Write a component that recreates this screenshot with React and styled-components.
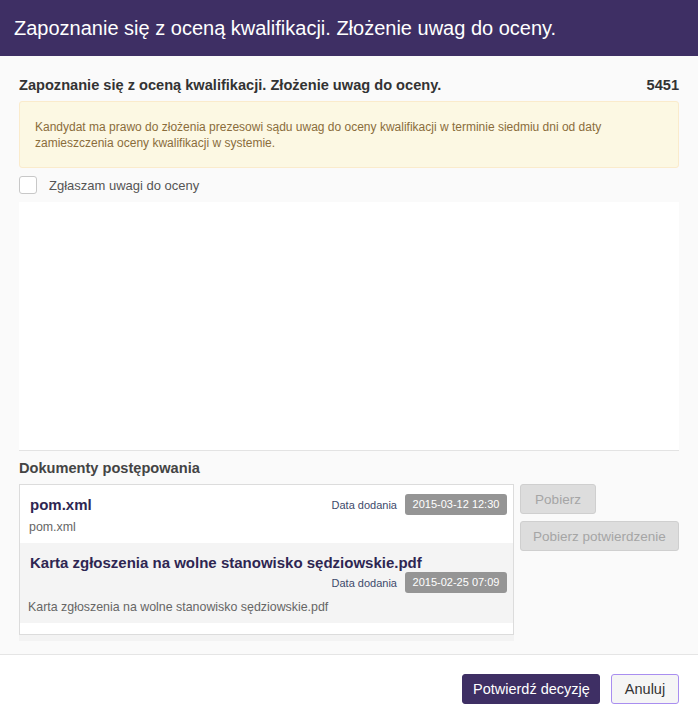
import React from "react";
import styled, { createGlobalStyle } from "styled-components";

const GlobalStyle = createGlobalStyle`
  html, body {
    margin: 0;
    padding: 0;
    background: #fff;
    font-family: "Liberation Sans", Arial, sans-serif;
  }
  * { box-sizing: border-box; }
`;

const Modal = styled.div`
  width: 698px;
  height: 724px;
  display: flex;
  flex-direction: column;
  background: #fff;
`;

const Header = styled.div`
  height: 56px;
  background: #3e2f64;
  color: #fff;
  display: flex;
  align-items: center;
  padding: 0 14px;
  font-size: 20px;
  flex-shrink: 0;
`;

const Body = styled.div`
  flex: 1;
  background: #fafafa;
  padding: 19px 19px 0;
  display: flex;
  flex-direction: column;
`;

const TitleRow = styled.div`
  height: 20px;
  display: flex;
  justify-content: space-between;
  align-items: center;
  font-size: 14.6px;
  font-weight: bold;
  color: #333;
`;

const Alert = styled.div`
  margin-top: 6px;
  background: #fcf8e3;
  border: 1px solid #faebcc;
  border-radius: 3px;
  color: #8a6d3b;
  font-size: 12px;
  line-height: 16px;
  padding: 17px 15px 16px;
`;

const CheckRow = styled.label`
  margin-top: 8px;
  display: flex;
  align-items: center;
  gap: 12px;
  font-size: 13px;
  color: #555;
`;

const Box = styled.span`
  width: 18px;
  height: 18px;
  border: 1px solid #c8c8c8;
  border-radius: 3px;
  background: #fff;
`;

const Blank = styled.div`
  margin-top: 8px;
  height: 249px;
  background: #fff;
  border-bottom: 1px solid #e3e3e3;
`;

const SectionTitle = styled.div`
  margin-top: 8px;
  font-size: 14.6px;
  font-weight: bold;
  color: #444;
  height: 18px;
  line-height: 18px;
`;

const DocsRow = styled.div`
  margin-top: 7px;
  display: flex;
  gap: 6px;
`;

const ListWrap = styled.div`
  width: 495px;
  flex-shrink: 0;
  background: #f3f3f3;
  padding-bottom: 6px;
`;

const List = styled.div`
  border: 1px solid #dcdcdc;
  background: #fff;
  padding-bottom: 11px;
`;

const Item = styled.div`
  background: ${(p) => (p.$alt ? "#f4f4f4" : "#fff")};
  padding: ${(p) => (p.$alt ? "11px 6px 9px 8px" : "9px 6px 9px 8px")};
`;

const ItemHead = styled.div`
  display: flex;
  align-items: center;
  justify-content: space-between;
  flex-wrap: wrap;
  gap: 1px 0;
`;

const ItemTitle = styled.div`
  font-size: 15px;
  font-weight: bold;
  color: #2e2652;
  padding-left: 2px;
  width: ${(p) => (p.$full ? "100%" : "auto")};
`;

const Meta = styled.div`
  display: flex;
  align-items: center;
  gap: 8px;
  margin-left: auto;
`;

const MetaLabel = styled.span`
  font-size: 11px;
  color: #3d4a6b;
`;

const Badge = styled.span`
  background: #959595;
  color: #fff;
  font-size: 11px;
  border-radius: 3px;
  height: 21px;
  line-height: 21px;
  width: 102px;
  text-align: center;
  white-space: nowrap;
`;

const Desc = styled.div`
  margin-top: ${(p) => (p.$alt ? "7px" : "5px")};
  font-size: 12.4px;
  color: #666;
  padding-left: ${(p) => (p.$alt ? "0" : "1px")};
`;

const Actions = styled.div`
  display: flex;
  flex-direction: column;
  align-items: flex-start;
  gap: 7px;
`;

const GreyButton = styled.button`
  height: 30px;
  min-width: 76px;
  padding: 0 12px;
  white-space: nowrap;
  font-family: "Liberation Sans", Arial, sans-serif;
  font-size: 13.5px;
  color: #a5a5a5;
  background: #dddddd;
  border: 1px solid #cfcfcf;
  border-radius: 3px;
`;

const Footer = styled.div`
  height: 70px;
  border-top: 1px solid #e5e5e5;
  display: flex;
  justify-content: flex-end;
  align-items: center;
  gap: 11px;
  padding: 0 19px 1px;
  flex-shrink: 0;
`;

const Button = styled.button`
  height: 30px;
  padding: 0 10px;
  white-space: nowrap;
  font-family: "Liberation Sans", Arial, sans-serif;
  font-size: 14.5px;
  border-radius: 3px;
  color: ${(p) => (p.$primary ? "#fff" : "#333")};
  background: ${(p) => (p.$primary ? "#3e2f64" : "#f5f5f5")};
  border: 1px solid ${(p) => (p.$primary ? "#3e2f64" : "#a98ef0")};
  width: ${(p) => (p.$primary ? "138px" : "68px")};
`;

export default function App() {
  return (
    <>
      <GlobalStyle />
      <Modal>
        <Header>Zapoznanie się z oceną kwalifikacji. Złożenie uwag do oceny.</Header>
        <Body>
          <TitleRow>
            <span>Zapoznanie się z oceną kwalifikacji. Złożenie uwag do oceny.</span>
            <span>5451</span>
          </TitleRow>
          <Alert>
            Kandydat ma prawo do złożenia prezesowi sądu uwag do oceny kwalifikacji w terminie siedmiu dni od daty
            zamieszczenia oceny kwalifikacji w systemie.
          </Alert>
          <CheckRow>
            <Box />
            Zgłaszam uwagi do oceny
          </CheckRow>
          <Blank />
          <SectionTitle>Dokumenty postępowania</SectionTitle>
          <DocsRow>
            <ListWrap>
              <List>
                <Item>
                  <ItemHead>
                    <ItemTitle>pom.xml</ItemTitle>
                    <Meta>
                      <MetaLabel>Data dodania</MetaLabel>
                      <Badge>2015-03-12 12:30</Badge>
                    </Meta>
                  </ItemHead>
                  <Desc>pom.xml</Desc>
                </Item>
                <Item $alt>
                  <ItemHead>
                    <ItemTitle $full>Karta zgłoszenia na wolne stanowisko sędziowskie.pdf</ItemTitle>
                    <Meta>
                      <MetaLabel>Data dodania</MetaLabel>
                      <Badge>2015-02-25 07:09</Badge>
                    </Meta>
                  </ItemHead>
                  <Desc $alt>Karta zgłoszenia na wolne stanowisko sędziowskie.pdf</Desc>
                </Item>
              </List>
            </ListWrap>
            <Actions>
              <GreyButton>Pobierz</GreyButton>
              <GreyButton>Pobierz potwierdzenie</GreyButton>
            </Actions>
          </DocsRow>
        </Body>
        <Footer>
          <Button $primary>Potwierdź decyzję</Button>
          <Button>Anuluj</Button>
        </Footer>
      </Modal>
    </>
  );
}
